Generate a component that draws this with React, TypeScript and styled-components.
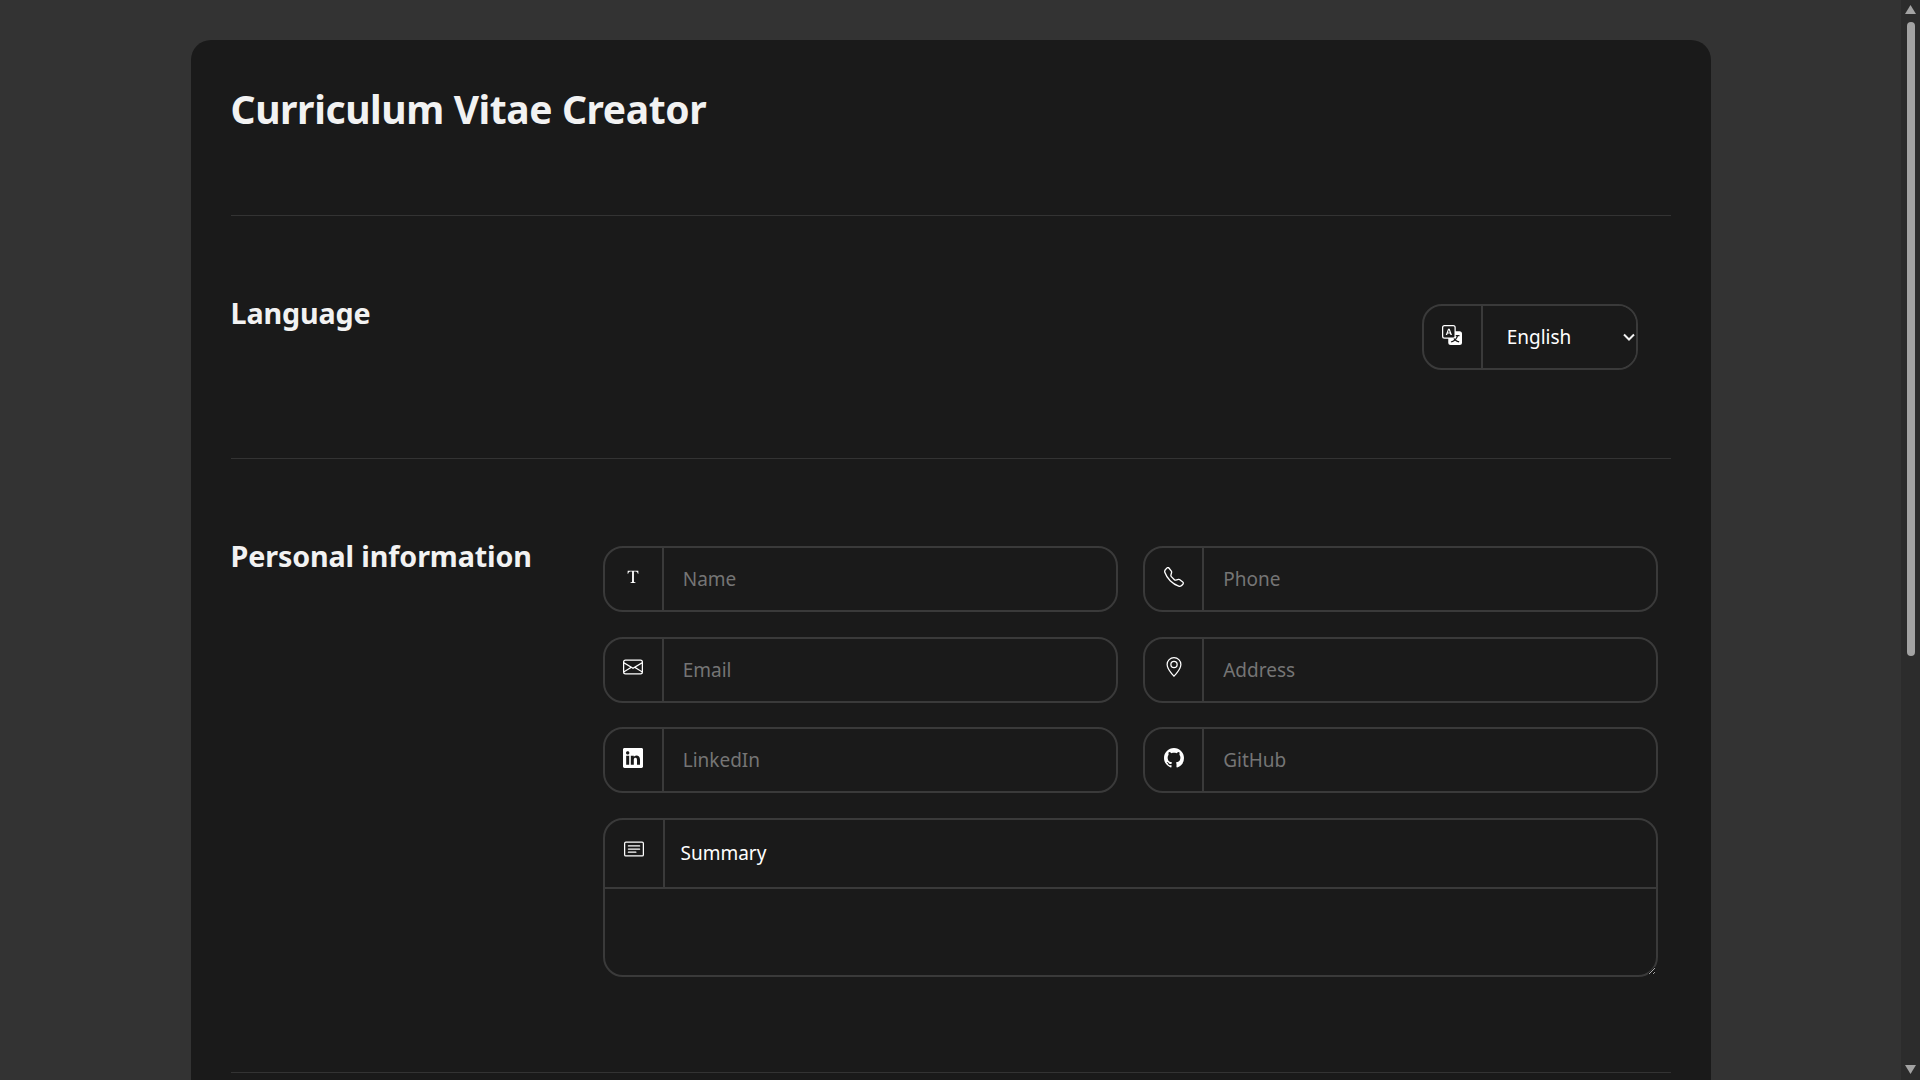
import React from 'react';
import styled, { createGlobalStyle } from 'styled-components';
import {
  BsCardText,
  BsEnvelope,
  BsFonts,
  BsGeoAlt,
  BsGithub,
  BsLinkedin,
  BsTelephone,
  BsTranslate,
} from 'react-icons/bs';

const chevron =
  "url(\"data:image/svg+xml,%3Csvg xmlns='http://www.w3.org/2000/svg' viewBox='0 0 12 8'%3E%3Cpath d='M1 1.5 L6 6.5 L11 1.5' fill='none' stroke='%23f2f2f2' stroke-width='2'/%3E%3C/svg%3E\")";

const GlobalStyle = createGlobalStyle`
  html {
    color-scheme: dark;
  }

  body {
    margin: 0;
    background-color: #333333;
    color: #f2f2f2;
    font-family: "Noto Sans", "Open Sans", sans-serif;
  }

  * {
    box-sizing: border-box;
  }
`;

const Page = styled.main`
  padding: 40px 19px 40px 0;
`;

const ScrollTrack = styled.div`
  position: fixed;
  top: 0;
  right: 0;
  bottom: 0;
  width: 19px;
  display: flex;
  flex-direction: column;
  align-items: center;
  padding: 5px 0 6px;
  background-color: #2c2c2c;
`;

const ScrollArrow = styled.svg`
  flex: none;
  width: 11px;
  height: 9px;
  fill: #a3a3a3;
`;

const ScrollThumb = styled.div`
  flex: none;
  width: 8px;
  height: 634px;
  margin-top: 8px;
  margin-bottom: auto;
  border-radius: 4px;
  background-color: #a3a3a3;
`;

const Card = styled.div`
  width: 1520px;
  min-height: 1685px;
  margin: 0 auto;
  padding: 40px;
  border-radius: 20px;
  background-color: #1a1a1a;
`;

const Title = styled.h1`
  margin: -1px 0 0;
  height: 136px;
  font-size: 39px;
  line-height: 60px;
  font-weight: 700;
  letter-spacing: -0.4px;
`;

const Rule = styled.hr`
  margin: 0;
  border: 0;
  border-top: 1px solid #333333;
`;

const Section = styled.section`
  display: grid;
  grid-template-columns: 372px 1fr;
  padding: 88px 0;
`;

const SectionTitle = styled.h2`
  margin: -11px 0 0;
  font-size: 28.7px;
  line-height: 40px;
  font-weight: 700;
  letter-spacing: -0.12px;
`;

const LanguageSlot = styled.div`
  display: flex;
  justify-content: flex-end;
  padding-right: 33px;
`;

const FieldGrid = styled.div`
  display: grid;
  grid-template-columns: 515px 514.5px;
  column-gap: 25.5px;
  row-gap: 24.67px;
  margin-top: -1px;
`;

const Field = styled.label<{ $width?: number }>`
  display: flex;
  width: ${(props) => (props.$width ? `${props.$width}px` : '100%')};
  height: 66px;
  border: 2px solid #3a3a3a;
  border-radius: 20px;
  overflow: hidden;
`;

const IconCell = styled.span`
  flex: 0 0 59.2px;
  display: flex;
  justify-content: center;
  padding-top: 18.6px;
  border-right: 2px solid #3a3a3a;
  color: #ffffff;
  font-size: 20px;
`;

const TextInput = styled.input`
  flex: 1;
  min-width: 0;
  padding: 0 19px;
  border: 0;
  outline: 0;
  background: transparent;
  color: #ffffff;
  font: inherit;
  font-size: 19px;

  &::placeholder {
    color: #757575;
    opacity: 1;
  }
`;

const LanguageSelect = styled.select`
  flex: 1;
  min-width: 0;
  padding: 0 4px 0 24px;
  border: 0;
  outline: 0;
  appearance: none;
  background-color: #1a1a1a;
  background-image: ${chevron};
  background-repeat: no-repeat;
  background-position: right 1px center;
  background-size: 12px 8px;
  color: #ffffff;
  font: inherit;
  font-size: 19px;
`;

const SummaryBox = styled.div`
  grid-column: 1 / -1;
  display: flex;
  flex-direction: column;
  height: 159px;
  margin-bottom: 7px;
  border: 2px solid #3a3a3a;
  border-radius: 20px;
`;

const SummaryHeader = styled.div`
  display: flex;
  height: 69px;
  flex: none;
  border-bottom: 2px solid #3a3a3a;
`;

const SummaryIcon = styled(IconCell)`
  flex-basis: 60px;
`;

const SummaryLabel = styled.span`
  align-self: center;
  padding-left: 16px;
  color: #ffffff;
  font-size: 19px;
`;

const SummaryText = styled.textarea`
  flex: 1;
  display: block;
  width: 100%;
  border: 0;
  border-radius: 0 0 18px 18px;
  outline: 0;
  padding: 8px 16px;
  background: transparent;
  color: #ffffff;
  font: inherit;
`;

const fields = [
  { placeholder: 'Name', icon: <BsFonts /> },
  { placeholder: 'Phone', icon: <BsTelephone /> },
  { placeholder: 'Email', icon: <BsEnvelope /> },
  { placeholder: 'Address', icon: <BsGeoAlt /> },
  { placeholder: 'LinkedIn', icon: <BsLinkedin /> },
  { placeholder: 'GitHub', icon: <BsGithub /> },
];

const App: React.FC = () => {
  return (
    <Page>
      <GlobalStyle />
      <Card>
        <Title>Curriculum Vitae Creator</Title>
        <Rule />
        <Section>
          <SectionTitle>Language</SectionTitle>
          <LanguageSlot>
            <Field $width={216}>
              <IconCell>
                <BsTranslate />
              </IconCell>
              <LanguageSelect defaultValue="en">
                <option value="en">English</option>
                <option value="es">Español</option>
              </LanguageSelect>
            </Field>
          </LanguageSlot>
        </Section>
        <Rule />
        <Section>
          <SectionTitle>Personal information</SectionTitle>
          <FieldGrid>
            {fields.map((field) => (
              <Field key={field.placeholder}>
                <IconCell>{field.icon}</IconCell>
                <TextInput placeholder={field.placeholder} />
              </Field>
            ))}
            <SummaryBox>
              <SummaryHeader>
                <SummaryIcon>
                  <BsCardText />
                </SummaryIcon>
                <SummaryLabel>Summary</SummaryLabel>
              </SummaryHeader>
              <SummaryText />
            </SummaryBox>
          </FieldGrid>
        </Section>
        <Rule />
      </Card>
      <ScrollTrack>
        <ScrollArrow viewBox="0 0 11 9">
          <path d="M0 9 L5.5 0 L11 9 Z" />
        </ScrollArrow>
        <ScrollThumb />
        <ScrollArrow viewBox="0 0 11 9">
          <path d="M0 0 L11 0 L5.5 9 Z" />
        </ScrollArrow>
      </ScrollTrack>
    </Page>
  );
};

export default App;
